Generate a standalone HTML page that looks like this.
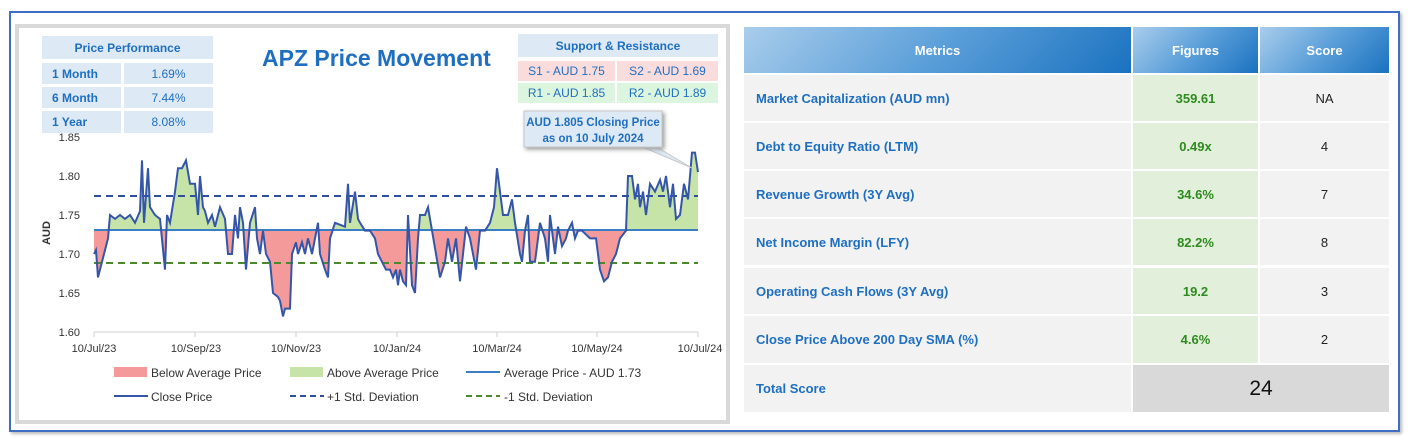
<!DOCTYPE html>
<html><head><meta charset="utf-8"><style>
body{margin:0;width:1411px;height:441px;background:#fff;position:relative;font-family:"Liberation Sans",sans-serif;overflow:hidden}
.a{position:absolute;box-sizing:border-box}
.c{display:flex;align-items:center;justify-content:center}
.l{display:flex;align-items:center;padding-left:12px}
.pb{background:#dde9f5;color:#1f6fc0;font-size:12px}
.b{font-weight:bold}
.t{font-size:13px;font-weight:bold;color:#1f6fc0}
.g{background:#e2efda;color:#2e8b1f;font-weight:bold;font-size:13px}
.s{color:#222;font-size:13px}
.row{background:#f2f2f2}
.h{background:linear-gradient(135deg,#a9cdec 0%,#5b9fd9 50%,#1a72c0 100%);color:#fff;font-weight:bold;font-size:13px}
</style></head><body>
<div class="a" style="left:9px;top:11px;width:1391px;height:421px;border:2px solid #3f6fc5;box-shadow:2px 2px 3px #bbb"></div>
<div class="a" style="left:15px;top:24px;width:715px;height:400px;border:4px solid #d9d9d9;background:#fff"></div>
<div class="a pb b c" style="left:42px;top:36px;width:171px;height:23px">Price Performance</div>
<div class="a pb b l" style="left:42px;top:63px;width:79px;height:21px;padding-left:10px">1 Month</div>
<div class="a pb c" style="left:124px;top:63px;width:89px;height:21px">1.69%</div>
<div class="a pb b l" style="left:42px;top:87px;width:79px;height:21px;padding-left:10px">6 Month</div>
<div class="a pb c" style="left:124px;top:87px;width:89px;height:21px">7.44%</div>
<div class="a pb b l" style="left:42px;top:111px;width:79px;height:22px;padding-left:10px">1 Year</div>
<div class="a pb c" style="left:124px;top:111px;width:89px;height:22px">8.08%</div>
<div class="a" style="left:262px;top:45px;font-size:23px;font-weight:bold;color:#1f6fc0">APZ Price Movement</div>
<div class="a pb b c" style="left:518px;top:34px;width:200px;height:23px">Support &amp; Resistance</div>
<div class="a c" style="left:518px;top:61px;width:97px;height:20px;background:#fbdcdc;color:#1f6fc0;font-size:12px">S1 - AUD 1.75</div>
<div class="a c" style="left:617px;top:61px;width:101px;height:20px;background:#fbdcdc;color:#1f6fc0;font-size:12px">S2 - AUD 1.69</div>
<div class="a c" style="left:518px;top:83px;width:97px;height:20px;background:#dcf5df;color:#1f6fc0;font-size:12px">R1 - AUD 1.85</div>
<div class="a c" style="left:617px;top:83px;width:101px;height:20px;background:#dcf5df;color:#1f6fc0;font-size:12px">R2 - AUD 1.89</div>
<svg class="a" style="left:0;top:0" width="740" height="441">
<defs>
<clipPath id="up" clipPathUnits="userSpaceOnUse"><rect x="0" y="1.73" width="800" height="0.3"/></clipPath>
<clipPath id="dn" clipPathUnits="userSpaceOnUse"><rect x="0" y="1.5" width="800" height="0.23"/></clipPath>
<polygon id="pf" points="94,1.73 94,1.70 96,1.705 98,1.67 104,1.70 108,1.72 110,1.75 115,1.745 120,1.75 125,1.745 130,1.75 135,1.74 140,1.755 142,1.82 144,1.74 148,1.81 150,1.76 155,1.75 160,1.745 165,1.68 167,1.75 170,1.74 175,1.78 178,1.81 182,1.81 186,1.82 190,1.79 195,1.79 198,1.75 200,1.80 203,1.76 205,1.755 208,1.74 212,1.75 215,1.735 220,1.76 225,1.745 228,1.70 232,1.70 235,1.75 238,1.72 240,1.76 243,1.74 246,1.68 250,1.74 255,1.76 257,1.72 260,1.70 263,1.73 266,1.70 270,1.69 273,1.65 278,1.645 280,1.64 283,1.62 285,1.63 290,1.63 292,1.70 296,1.715 298,1.70 302,1.715 305,1.70 308,1.72 312,1.70 315,1.72 318,1.74 320,1.70 325,1.68 328,1.67 330,1.72 335,1.74 345,1.735 348,1.79 350,1.74 355,1.78 358,1.745 360,1.74 365,1.73 370,1.73 375,1.72 378,1.70 382,1.69 386,1.68 390,1.68 393,1.67 396,1.68 398,1.66 400,1.68 403,1.665 406,1.66 408,1.75 412,1.66 415,1.65 418,1.72 420,1.75 425,1.75 428,1.76 432,1.73 436,1.70 440,1.67 445,1.69 448,1.72 452,1.69 456,1.72 460,1.665 463,1.70 466,1.735 470,1.72 473,1.70 476,1.68 480,1.73 485,1.73 490,1.74 494,1.76 497,1.81 500,1.78 503,1.75 508,1.75 512,1.77 515,1.74 520,1.70 522,1.69 525,1.73 528,1.75 530,1.69 535,1.69 540,1.74 545,1.72 548,1.69 550,1.75 555,1.70 558,1.735 562,1.71 566,1.72 568,1.73 572,1.74 575,1.72 578,1.73 582,1.73 590,1.72 596,1.72 600,1.68 604,1.665 608,1.67 612,1.69 616,1.70 620,1.72 626,1.73 628,1.80 632,1.80 635,1.77 638,1.79 640,1.76 643,1.78 646,1.75 650,1.79 655,1.78 660,1.795 663,1.78 666,1.80 670,1.76 673,1.79 676,1.745 680,1.75 684,1.79 688,1.77 690,1.80 692,1.83 695,1.83 698,1.805 698,1.73"/>
</defs>
<g font-family="Liberation Sans" font-size="11" fill="#333" text-anchor="end">
<text x="80" y="141">1.85</text><text x="80" y="180">1.80</text><text x="80" y="219">1.75</text>
<text x="80" y="258">1.70</text><text x="80" y="297">1.65</text><text x="80" y="336">1.60</text>
</g>
<text transform="translate(50,233) rotate(-90)" font-family="Liberation Sans" font-size="11" font-weight="bold" fill="#333" text-anchor="middle">AUD</text>
<line x1="94" y1="332" x2="698" y2="332" stroke="#d0d0d0"/>
<g stroke="#d0d0d0"><line x1="94" y1="332" x2="94" y2="337"/><line x1="195" y1="332" x2="195" y2="337"/><line x1="296" y1="332" x2="296" y2="337"/><line x1="397" y1="332" x2="397" y2="337"/><line x1="497" y1="332" x2="497" y2="337"/><line x1="597" y1="332" x2="597" y2="337"/><line x1="698" y1="332" x2="698" y2="337"/></g>
<g font-family="Liberation Sans" font-size="11" fill="#333" text-anchor="middle">
<text x="94" y="352">10/Jul/23</text><text x="196" y="352">10/Sep/23</text><text x="296" y="352">10/Nov/23</text><text x="397" y="352">10/Jan/24</text><text x="497" y="352">10/Mar/24</text><text x="597" y="352">10/May/24</text><text x="700" y="352">10/Jul/24</text>
</g>
<g transform="matrix(1 0 0 -780 0 1580)">
<use href="#pf" clip-path="url(#up)" fill="#c6e3a8"/>
<use href="#pf" clip-path="url(#dn)" fill="#f59a9a"/>
</g>
<line x1="94" y1="196" x2="698" y2="196" stroke="#2f4f9a" stroke-width="2" stroke-dasharray="7,5"/>
<line x1="94" y1="263" x2="698" y2="263" stroke="#4a8a2a" stroke-width="2" stroke-dasharray="7,5"/>
<line x1="94" y1="230" x2="698" y2="230" stroke="#3a7ec5" stroke-width="2"/>
<g transform="matrix(1 0 0 -780 0 1580)">
<polyline fill="none" stroke="#3556a8" stroke-width="2" vector-effect="non-scaling-stroke" points="94,1.70 96,1.705 98,1.67 104,1.70 108,1.72 110,1.75 115,1.745 120,1.75 125,1.745 130,1.75 135,1.74 140,1.755 142,1.82 144,1.74 148,1.81 150,1.76 155,1.75 160,1.745 165,1.68 167,1.75 170,1.74 175,1.78 178,1.81 182,1.81 186,1.82 190,1.79 195,1.79 198,1.75 200,1.80 203,1.76 205,1.755 208,1.74 212,1.75 215,1.735 220,1.76 225,1.745 228,1.70 232,1.70 235,1.75 238,1.72 240,1.76 243,1.74 246,1.68 250,1.74 255,1.76 257,1.72 260,1.70 263,1.73 266,1.70 270,1.69 273,1.65 278,1.645 280,1.64 283,1.62 285,1.63 290,1.63 292,1.70 296,1.715 298,1.70 302,1.715 305,1.70 308,1.72 312,1.70 315,1.72 318,1.74 320,1.70 325,1.68 328,1.67 330,1.72 335,1.74 345,1.735 348,1.79 350,1.74 355,1.78 358,1.745 360,1.74 365,1.73 370,1.73 375,1.72 378,1.70 382,1.69 386,1.68 390,1.68 393,1.67 396,1.68 398,1.66 400,1.68 403,1.665 406,1.66 408,1.75 412,1.66 415,1.65 418,1.72 420,1.75 425,1.75 428,1.76 432,1.73 436,1.70 440,1.67 445,1.69 448,1.72 452,1.69 456,1.72 460,1.665 463,1.70 466,1.735 470,1.72 473,1.70 476,1.68 480,1.73 485,1.73 490,1.74 494,1.76 497,1.81 500,1.78 503,1.75 508,1.75 512,1.77 515,1.74 520,1.70 522,1.69 525,1.73 528,1.75 530,1.69 535,1.69 540,1.74 545,1.72 548,1.69 550,1.75 555,1.70 558,1.735 562,1.71 566,1.72 568,1.73 572,1.74 575,1.72 578,1.73 582,1.73 590,1.72 596,1.72 600,1.68 604,1.665 608,1.67 612,1.69 616,1.70 620,1.72 626,1.73 628,1.80 632,1.80 635,1.77 638,1.79 640,1.76 643,1.78 646,1.75 650,1.79 655,1.78 660,1.795 663,1.78 666,1.80 670,1.76 673,1.79 676,1.745 680,1.75 684,1.79 688,1.77 690,1.80 692,1.83 695,1.83 698,1.805"/>
</g>
<polygon points="640,146 655,146 692,168" fill="#dde9f5" stroke="#c8c8c8"/>
<rect x="524" y="111" width="138" height="36" fill="#dde9f5" stroke="#c8c8c8" style="filter:drop-shadow(2px 2px 2px #999)"/>
<g font-family="Liberation Sans" font-size="11.5" font-weight="bold" fill="#1f6fc0" text-anchor="middle">
<text x="593" y="126">AUD 1.805 Closing Price</text><text x="593" y="142">as on  10 July 2024</text></g>
<g font-family="Liberation Sans" font-size="12" fill="#333">
<rect x="114" y="367" width="33" height="10" fill="#f59a9a"/><text x="151" y="377">Below Average Price</text>
<rect x="290" y="367" width="33" height="10" fill="#c6e3a8"/><text x="327" y="377">Above Average Price</text>
<line x1="466" y1="372" x2="500" y2="372" stroke="#3a7ec5" stroke-width="2"/><text x="504" y="377">Average Price - AUD 1.73</text>
<line x1="114" y1="396" x2="148" y2="396" stroke="#3556a8" stroke-width="2"/><text x="151" y="401">Close Price</text>
<line x1="290" y1="396" x2="324" y2="396" stroke="#2f4f9a" stroke-width="2" stroke-dasharray="6,4"/><text x="327" y="401">+1 Std. Deviation</text>
<line x1="466" y1="396" x2="500" y2="396" stroke="#4a8a2a" stroke-width="2" stroke-dasharray="6,4"/><text x="504" y="401">-1 Std. Deviation</text>
</g>
</svg>
<div class="a h c" style="left:744px;top:27px;width:387px;height:46px">Metrics</div>
<div class="a h c" style="left:1133px;top:27px;width:125px;height:46px">Figures</div>
<div class="a h c" style="left:1260px;top:27px;width:129px;height:46px">Score</div>

<div class="a row t l" style="left:744px;top:75px;width:387px;height:46px">Market Capitalization (AUD mn)</div>
<div class="a g c" style="left:1133px;top:75px;width:125px;height:46px">359.61</div>
<div class="a row s c" style="left:1260px;top:75px;width:129px;height:46px">NA</div>

<div class="a row t l" style="left:744px;top:123px;width:387px;height:46px">Debt to Equity Ratio (LTM)</div>
<div class="a g c" style="left:1133px;top:123px;width:125px;height:46px">0.49x</div>
<div class="a row s c" style="left:1260px;top:123px;width:129px;height:46px">4</div>

<div class="a row t l" style="left:744px;top:171px;width:387px;height:46px">Revenue Growth (3Y Avg)</div>
<div class="a g c" style="left:1133px;top:171px;width:125px;height:46px">34.6%</div>
<div class="a row s c" style="left:1260px;top:171px;width:129px;height:46px">7</div>

<div class="a row t l" style="left:744px;top:219px;width:387px;height:46px">Net Income Margin (LFY)</div>
<div class="a g c" style="left:1133px;top:219px;width:125px;height:46px">82.2%</div>
<div class="a row s c" style="left:1260px;top:219px;width:129px;height:46px">8</div>

<div class="a row t l" style="left:744px;top:268px;width:387px;height:46px">Operating Cash Flows (3Y Avg)</div>
<div class="a g c" style="left:1133px;top:268px;width:125px;height:46px">19.2</div>
<div class="a row s c" style="left:1260px;top:268px;width:129px;height:46px">3</div>

<div class="a row t l" style="left:744px;top:316px;width:387px;height:47px">Close Price Above 200 Day SMA (%)</div>
<div class="a g c" style="left:1133px;top:316px;width:125px;height:47px">4.6%</div>
<div class="a row s c" style="left:1260px;top:316px;width:129px;height:47px">2</div>

<div class="a row t l" style="left:744px;top:365px;width:387px;height:47px">Total Score</div>
<div class="a c" style="left:1133px;top:365px;width:256px;height:47px;background:#d9d9d9;font-size:21px;color:#111">24</div>
</body></html>
